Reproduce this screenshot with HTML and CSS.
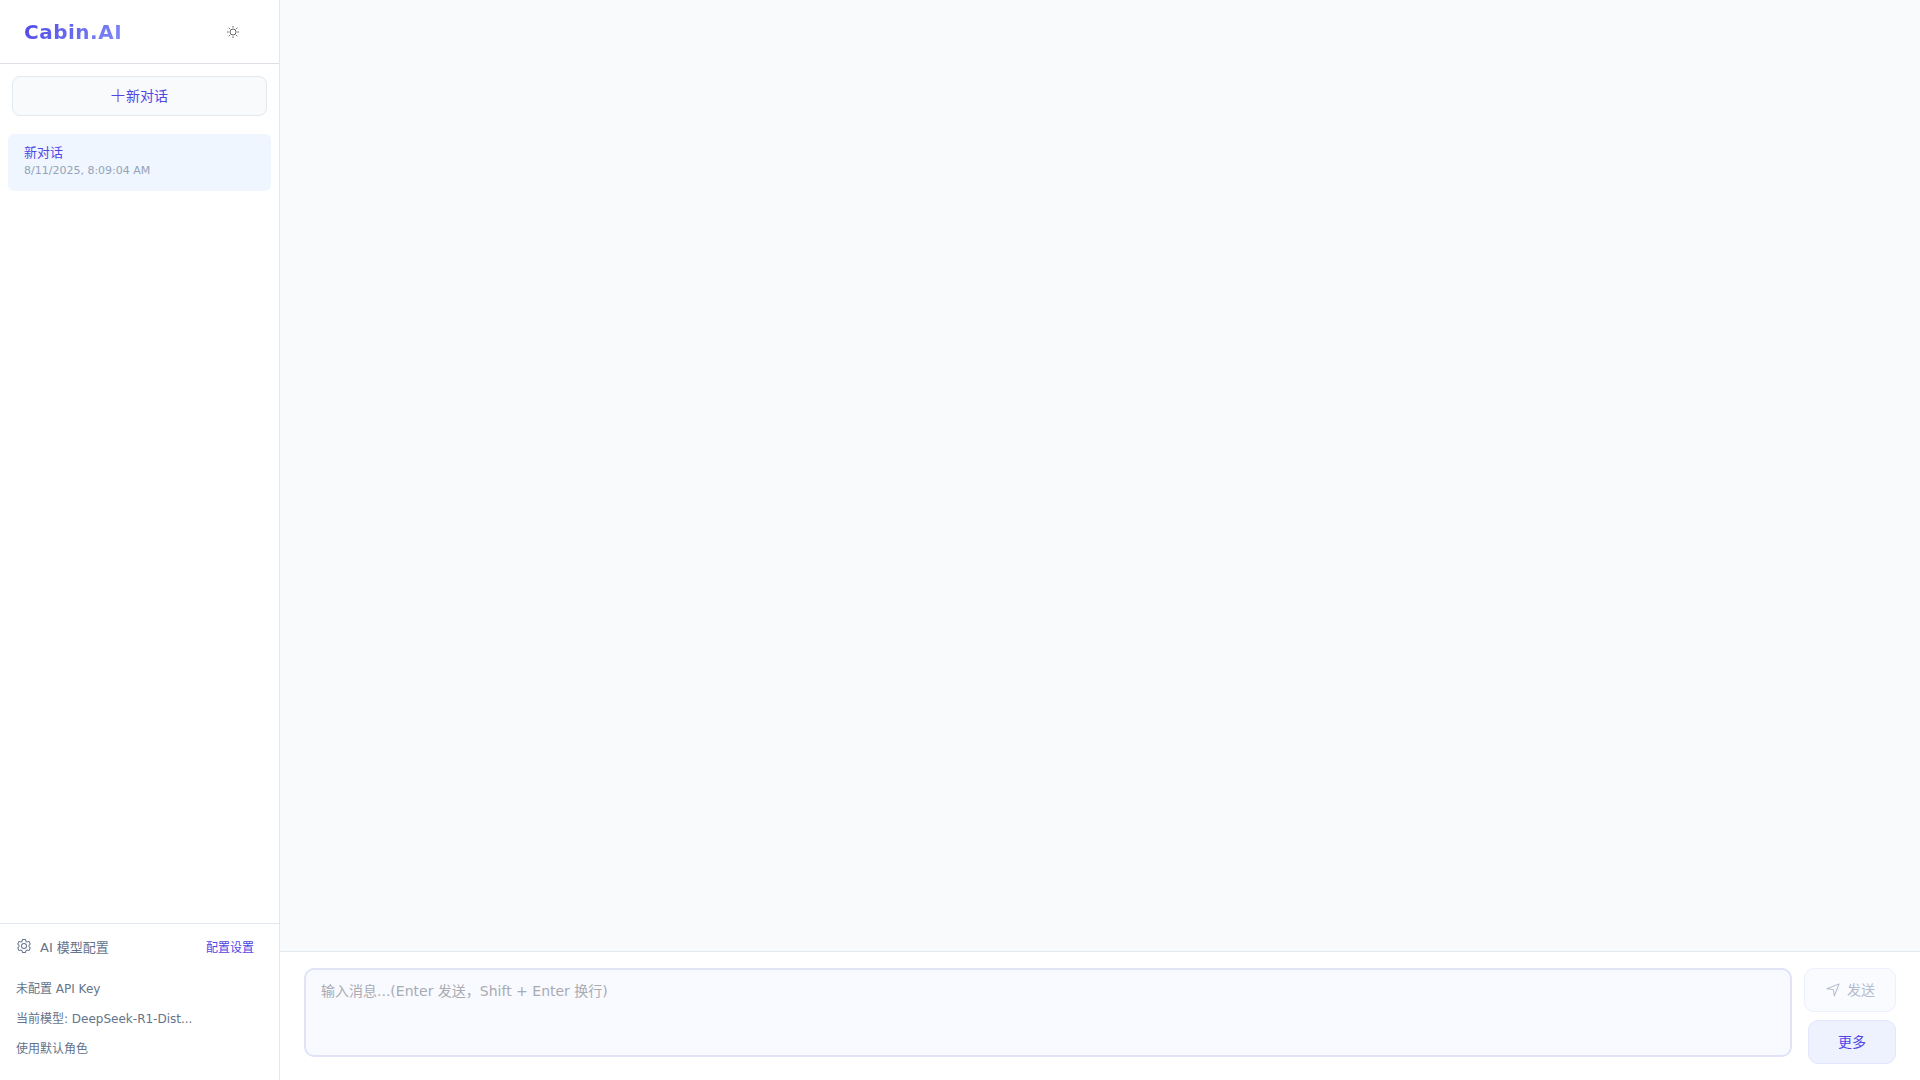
FILE: index.html
```
<!DOCTYPE html>
<html lang="zh-CN">
<head>
  <meta charset="UTF-8">
  <meta name="viewport" content="width=device-width, initial-scale=1.0">
  <title>Cabin.AI</title>
  <link rel="stylesheet" href="styles.css">
</head>
<body>

<aside class="sidebar">
  <header class="sidebar-header">
    <h1 class="logo">Cabin.AI</h1>
    <button class="theme-toggle" type="button" aria-label="切换主题">
      <svg width="14" height="14" viewBox="0 0 14 14" fill="none" stroke="currentColor">
        <circle cx="7" cy="7" r="3"/>
        <path d="M7 1v1.6M7 11.4V13M1 7h1.6M11.4 7H13M2.7 2.7l1.1 1.1M10.2 10.2l1.1 1.1M2.7 11.3l1.1-1.1M10.2 3.8l1.1-1.1"/>
      </svg>
    </button>
  </header>

  <button class="new-chat" type="button">
    <svg width="14" height="14" viewBox="0 0 14 14" fill="none" stroke="currentColor">
      <path d="M7 0v13M.5 6.500h13"/>
    </svg>
    <span class="label">新对话</span>
  </button>

  <nav class="chat-list">
    <a class="chat-item active" href="#">
      <span class="chat-title">新对话</span>
      <time class="chat-time">8/11/2025, 8:09:04 AM</time>
    </a>
  </nav>

  <footer class="config">
    <div class="config-header">
      <svg width="16" height="16" viewBox="0 0 1024 1024" fill="currentColor">
        <path d="M600.704 64a32 32 0 0 1 30.464 22.208l35.2 109.376c14.784 7.232 28.928 15.36 42.432 24.512l112.384-24.192a32 32 0 0 1 34.432 15.36L944.32 364.8a32 32 0 0 1-4.032 37.504l-77.12 85.12a357.12 357.12 0 0 1 0 49.024l77.12 85.248a32 32 0 0 1 4.032 37.504l-88.704 153.6a32 32 0 0 1-34.432 15.296L708.8 803.904c-13.44 9.088-27.648 17.28-42.368 24.512l-35.264 109.376A32 32 0 0 1 600.704 960H423.296a32 32 0 0 1-30.464-22.208L357.696 828.48a351.616 351.616 0 0 1-42.56-24.64l-112.32 24.256a32 32 0 0 1-34.432-15.36L79.68 659.2a32 32 0 0 1 4.032-37.504l77.12-85.248a357.12 357.12 0 0 1 0-48.896l-77.12-85.248A32 32 0 0 1 79.68 364.8l88.704-153.6a32 32 0 0 1 34.432-15.296l112.32 24.256c13.568-9.152 27.776-17.408 42.56-24.64l35.2-109.312A32 32 0 0 1 423.232 64H600.64zm-23.424 64H446.72l-36.352 113.088-24.512 11.968a294.113 294.113 0 0 0-34.816 20.096l-22.656 15.36-116.224-25.088-65.28 113.152 79.68 88.192-1.92 27.136a293.12 293.12 0 0 0 0 40.192l1.92 27.136-79.808 88.192 65.344 113.152 116.224-25.024 22.656 15.296a294.113 294.113 0 0 0 34.816 20.096l24.512 11.968L446.72 896h130.688l36.48-113.152 24.448-11.904a288.282 288.282 0 0 0 34.752-20.096l22.592-15.296 116.288 25.024 65.28-113.152-79.744-88.192 1.92-27.136a293.12 293.12 0 0 0 0-40.256l-1.92-27.136 79.808-88.128-65.344-113.152-116.288 24.96-22.592-15.232a287.616 287.616 0 0 0-34.752-20.096l-24.448-11.904L577.344 128zM512 320a192 192 0 1 1 0 384 192 192 0 0 1 0-384m0 64a128 128 0 1 0 0 256 128 128 0 0 0 0-256"/>
      </svg>
      <span class="config-title">AI 模型配置</span>
      <button class="config-link" type="button">配置设置</button>
    </div>
    <ul class="config-info">
      <li>未配置 API Key</li>
      <li>当前模型: DeepSeek-R1-Dist...</li>
      <li>使用默认角色</li>
    </ul>
  </footer>
</aside>

<main class="main">
  <section class="messages"></section>
  <form class="composer">
    <textarea class="message-input" aria-label="消息" placeholder="输入消息...(Enter 发送，Shift + Enter 换行)"></textarea>
    <div class="actions">
      <button class="btn send" type="submit" disabled>
        <svg width="16" height="16" viewBox="0 0 1024 1024" fill="currentColor">
          <path d="m249.6 417.088 319.744 43.072 39.168 310.272L845.12 178.88 249.6 417.088zm-129.024 47.168a32 32 0 0 1-7.68-61.44l777.792-311.04a32 32 0 0 1 41.6 41.6l-310.72 776.32a32 32 0 0 1-61.44-7.808L512 516.992l-391.424-52.736z"/>
        </svg>
        <span class="label">发送</span>
      </button>
      <button class="btn more" type="button"><span class="label">更多</span></button>
    </div>
  </form>
</main>

</body>
</html>
```
FILE: styles.css
```
* {
  box-sizing: border-box;
}

body {
  margin: 0;
  height: 100vh;
  display: flex;
  font-family: "DejaVu Sans", "Noto Sans CJK SC", sans-serif;
  font-size: 14px;
  color: #64748b;
  background-color: #f8fafc;
}

button,
textarea {
  font: inherit;
}

button {
  cursor: pointer;
}

svg {
  flex-shrink: 0;
}

.label {
  padding-bottom: 2px;
}

.sidebar {
  width: 280px;
  flex-shrink: 0;
  display: flex;
  flex-direction: column;
  background-color: #fff;
  border-right: 1px solid #e2e8f0;
}

.sidebar-header {
  height: 64px;
  padding: 0 32px 0 24px;
  display: flex;
  align-items: center;
  justify-content: space-between;
  border-bottom: 1px solid #dcdfe6;
}

.logo {
  margin: 0;
  font-size: 20px;
  font-weight: 600;
  letter-spacing: 0.5px;
  background: linear-gradient(135deg, #4f46e5, #818cf8);
  background-clip: text;
  -webkit-background-clip: text;
  color: transparent;
}

.theme-toggle {
  padding: 7px;
  display: flex;
  color: #606266;
  background: none;
  border: none;
}

.new-chat {
  height: 40px;
  margin: 12px 12px 18px;
  display: flex;
  align-items: center;
  justify-content: center;
  gap: 1px;
  color: #4f46e5;
  background-color: #f8fafc;
  border: 1px solid #e2e8f0;
  border-radius: 8px;
}

.chat-list {
  flex: 1;
  padding: 0 8px;
}

.chat-item {
  padding: 10px 16px 11px;
  display: flex;
  flex-direction: column;
  border-radius: 6px;
  text-decoration: none;
}

.chat-item.active {
  background-color: #eff6ff;
}

.chat-title {
  font-size: 13px;
  line-height: 18px;
  color: #4f46e5;
}

.chat-time {
  font-size: 11px;
  line-height: 18px;
  color: #94a3b8;
}

.config {
  padding: 6px 16px 16px;
  border-top: 1px solid #e2e8f0;
}

.config-header {
  height: 32px;
  margin-bottom: 12px;
  padding-right: 9px;
  display: flex;
  align-items: center;
  gap: 8px;
}

.config-title {
  flex: 1;
  font-size: 13px;
}

.config-link {
  padding: 0;
  font-size: 12px;
  color: #4f46e5;
  background: none;
  border: none;
}

.config-info {
  margin: 0;
  padding: 0;
  list-style: none;
  font-size: 12px;
  line-height: 30px;
}

.main {
  flex: 1;
  min-width: 0;
  display: flex;
  flex-direction: column;
}

.messages {
  flex: 1;
}

.composer {
  padding: 16px 24px;
  display: flex;
  align-items: flex-start;
  gap: 12px;
  background-color: #fff;
  border-top: 1px solid #e2e8f0;
}

.message-input {
  flex: 1;
  height: 89px;
  padding: 11px 15px;
  line-height: 21px;
  color: #1e293b;
  background-color: #f8faff;
  border: 2px solid #e0e4f6;
  border-radius: 10px;
  resize: none;
  outline: none;
}

.message-input::placeholder {
  color: #a8abb2;
}

.actions {
  display: flex;
  flex-direction: column;
  align-items: flex-end;
  gap: 8px;
}

.btn {
  height: 44px;
  min-width: 88px;
  padding: 0 20px;
  display: flex;
  align-items: center;
  justify-content: center;
  gap: 6px;
  color: #4f46e5;
  background-color: #eef2ff;
  border: 1px solid #e0e7ff;
  border-radius: 10px;
}

.send:disabled {
  color: #b4bccc;
  background-color: #fafbff;
  border-color: #eceffe;
  cursor: not-allowed;
}
```
